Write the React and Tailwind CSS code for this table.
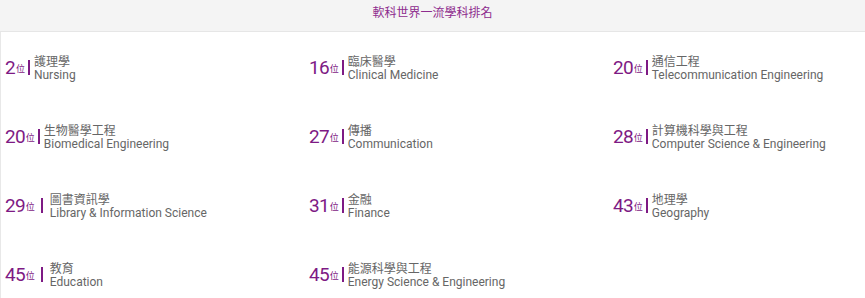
import React from "react";

const items = [
  ["2", "護理學", "Nursing", false],
  ["16", "臨床醫學", "Clinical Medicine", false],
  ["20", "通信工程", "Telecommunication Engineering", false],
  ["20", "生物醫學工程", "Biomedical Engineering", false],
  ["27", "傳播", "Communication", false],
  ["28", "計算機科學與工程", "Computer Science & Engineering", false],
  ["29", "圖書資訊學", "Library & Information Science", true],
  ["31", "金融", "Finance", false],
  ["43", "地理學", "Geography", false],
  ["45", "教育", "Education", true],
  ["45", "能源科學與工程", "Energy Science & Engineering", false],
];

export default function App() {
  return (
    <div
      className="w-[865px] h-[298px] overflow-hidden bg-white"
      style={{ fontFamily: 'Roboto, "Noto Sans CJK TC", sans-serif' }}
    >
      <div className="h-[32px] bg-[#f4f4f4] border-b border-[#e6e6e6] flex items-center justify-center">
        <span className="text-[12px] text-[#8e2c8e] leading-none pb-[6px]">
          軟科世界一流學科排名
        </span>
      </div>
      <div className="border-l border-[#e8e8e8] h-[266px] pl-[4px] pt-[20px]">
        <div className="grid grid-cols-[304px_304px_1fr] gap-y-[41px]">
          {items.map(([n, zh, en, sp], i) => (
            <div key={i} className="flex items-center h-[28px]">
              <span className="text-[19px] tracking-[-0.8px] leading-none text-[#7e1a84] mt-[2px]">{n}</span>
              <span className="text-[9px] leading-none text-[#7e1a84] self-end mb-[6px] ml-[1px]">位</span>
              <span className={`w-[2px] h-[15px] bg-[#7e1a84] mt-[2px] ${sp ? "ml-[6px] mr-[7px]" : "ml-[3px] mr-[4px]"}`}></span>
              <div className="flex flex-col text-[#666666] mt-[5px]">
                <span className="text-[12px] leading-[13px]">{zh}</span>
                <span className="text-[12px] leading-[13px]">{en}</span>
              </div>
            </div>
          ))}
        </div>
      </div>
    </div>
  );
}
